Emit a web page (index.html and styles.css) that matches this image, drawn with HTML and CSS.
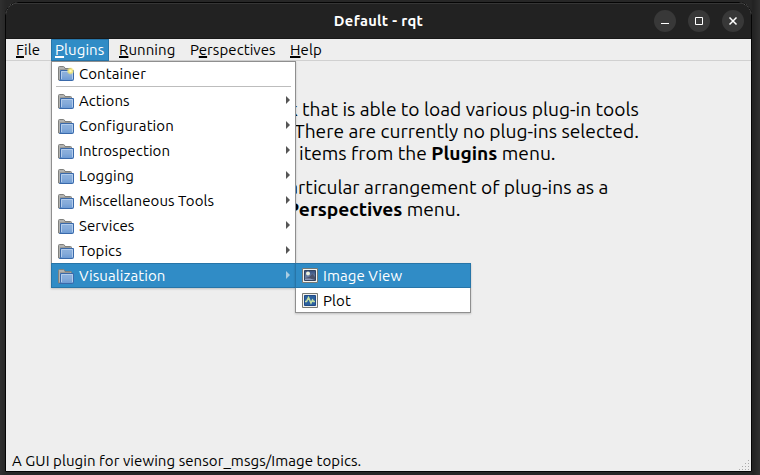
FILE: index.html
```html
<!DOCTYPE html>
<html lang="en">
<head>
<meta charset="utf-8">
<title>Default - rqt</title>
<link rel="stylesheet" href="styles.css">
</head>
<body>
<svg class="defs" width="0" height="0">
  <defs>
    <linearGradient id="blue" x1="0" y1="0" x2="0" y2="1"><stop offset="0" stop-color="#8fb3de"/><stop offset=".5" stop-color="#86abd9"/><stop offset="1" stop-color="#6b9ad4"/></linearGradient>
    <linearGradient id="night" x1="0" y1="0" x2="0" y2="1"><stop offset="0" stop-color="#354d7c"/><stop offset="1" stop-color="#8a9dbf"/></linearGradient>
    <radialGradient id="glow"><stop offset="0" stop-color="#fffde0"/><stop offset=".45" stop-color="#f5e976"/><stop offset="1" stop-color="#f5e976" stop-opacity="0"/></radialGradient>
    <symbol id="folder" viewBox="0 0 16 15">
      <path d="M.5 14V1.500Q.5.500 1.500.500H5.500Q6.500.500 7 2.500H12.500Q13.500 2.500 13.500 3.500V14Z" fill="#b3b3b0" stroke="#80817e"/>
      <path d="M2 3.500H12.500" stroke="#989996"/>
      <path d="M2.500 4.500H15.500V13.500Q15.500 14.500 14.500 14.500H1.500L2.500 13.500Z" fill="url(#blue)" stroke="#3969aa"/>
      <path d="M3.500 13V5.500H14.500V13" fill="none" stroke="#b3cceb"/>
    </symbol>
  </defs>
</svg>
<div class="window">
  <header class="titlebar">
    <div class="title">Default - rqt</div>
    <div class="controls">
      <svg viewBox="0 0 22 22"><circle cx="11" cy="11" r="11"/><path d="M7 13.500H15"/></svg>
      <svg viewBox="0 0 22 22"><circle cx="11" cy="11" r="11"/><path d="M7.500 7.500H14.500V14.500H7.500Z"/></svg>
      <svg viewBox="0 0 22 22"><circle cx="11" cy="11" r="11"/><path d="M7.500 7.500L14.500 14.500M14.500 7.500L7.500 14.500" stroke-width="1.500"/></svg>
    </div>
  </header>
  <nav class="menubar">
    <div class="item file"><u>F</u>ile</div>
    <div class="item plugins"><u>P</u>lugins</div>
    <div class="item running"><u>R</u>unning</div>
    <div class="item persp">P<u>e</u>rspectives</div>
    <div class="item help"><u>H</u>elp</div>
  </nav>
  <main class="content">
    <p class="l1">k that is able to load various plug-in tools</p>
    <p class="l2">There are currently no plug-ins selected.</p>
    <p class="l3">items from the <b>Plugins</b> menu.</p>
    <p class="l4">particular arrangement of plug-ins as a</p>
    <p class="l5"><b>Perspectives</b> menu.</p>
  </main>
  <footer class="status">
    <span>A GUI plugin for viewing sensor_msgs/Image topics.</span>
    <svg class="grip" width="10" height="11" viewBox="0 0 10 11"><path d="M9 0h1v1h-1zM6 3h1v1h-1zM9 3h1v1h-1zM3 6h1v1h-1zM6 6h1v1h-1zM9 6h1v1h-1zM0 9h1v1h-1zM3 9h1v1h-1zM6 9h1v1h-1zM9 9h1v1h-1z"/></svg>
  </footer>
</div>

<div class="menu">
  <div class="row first"><svg class="icon"><use href="#folder"/><circle cx="12.500" cy="5" r="4" fill="url(#glow)"/></svg><span>Container</span></div>
  <div class="sep"></div>
  <div class="row"><svg class="icon"><use href="#folder"/></svg><span>Actions</span><i class="arrow"></i></div>
  <div class="row"><svg class="icon"><use href="#folder"/></svg><span>Configuration</span><i class="arrow"></i></div>
  <div class="row"><svg class="icon"><use href="#folder"/></svg><span>Introspection</span><i class="arrow"></i></div>
  <div class="row"><svg class="icon"><use href="#folder"/></svg><span>Logging</span><i class="arrow"></i></div>
  <div class="row"><svg class="icon"><use href="#folder"/></svg><span>Miscellaneous Tools</span><i class="arrow"></i></div>
  <div class="row"><svg class="icon"><use href="#folder"/></svg><span>Services</span><i class="arrow"></i></div>
  <div class="row"><svg class="icon"><use href="#folder"/></svg><span>Topics</span><i class="arrow"></i></div>
  <div class="row active"><svg class="icon"><use href="#folder"/></svg><span>Visualization</span><i class="arrow"></i></div>
</div>

<div class="menu submenu">
  <div class="row active">
    <svg class="icon"><path d="M.5.500h15v14h-15z" fill="#f3f3ef" stroke="#777974"/><path d="M2.500 2.500h11v10h-11z" fill="url(#night)" stroke="#34435f"/><circle cx="6" cy="5.500" r="2" fill="#edf0dc"/><path d="M3 10L7 9L10.500 6L13 9V12H3Z" fill="#4c526b"/><path d="M3 10.500H8L13 12H3Z" fill="#8d9abb"/></svg>
    <span>Image View</span>
  </div>
  <div class="row">
    <svg class="icon"><path d="M.5.500h15v14h-15z" fill="#f3f3ef" stroke="#777974"/><path d="M2.500 2.500h11v10h-11z" fill="#2c619e" stroke="#204a87"/><path d="M3 8.500H4.500L6.500 4.500L9 10L10.500 7L11.500 8.500H13" fill="none" stroke="#c3dfa3" stroke-width="1.600"/></svg>
    <span>Plot</span>
  </div>
</div>
</body>
</html>
```
FILE: styles.css
```css
* { box-sizing: border-box; }
html, body { margin: 0; width: 760px; height: 475px; overflow: hidden; }
body {
  padding: 2px 8px 3px 5px;
  background: linear-gradient(90deg, #303030, #272727 6px, #272727 751px, #222 753px, #303030);
  color: #000;
  font: 15px/20px Ubuntu, "Noto Sans", sans-serif;
  letter-spacing: .07px;
}
.defs { position: absolute; }
span, p { white-space: pre; }
.window {
  display: flex; flex-direction: column;
  width: 747px; height: 470px;
  border: 1px solid #050505; border-radius: 13px 13px 0 0;
  background: #eee; overflow: hidden;
}
.titlebar {
  display: grid; grid-template-columns: 1fr auto 1fr;
  align-items: center; height: 36px; flex: none;
  background: #222; box-shadow: inset 0 1px #363636;
  border-bottom: 1px solid #181818;
}
.title { grid-column: 2; color: #fff; font-weight: bold; font-size: 14.667px; letter-spacing: .32px; }
.controls { display: flex; justify-content: flex-end; gap: 12px; padding-right: 7px; }
.controls svg { width: 22px; height: 22px; }
.controls circle { fill: #383838; }
.controls path { fill: none; stroke: #fff; }
.menubar { display: flex; height: 22px; flex: none; border-bottom: 1px solid #d0d0d0; }
.item { height: 22px; padding-left: 4px; line-height: 22px; }
.item u { text-decoration-thickness: 2px; text-underline-offset: 1px; text-decoration-skip-ink: none; }
.file { width: 45px; padding-left: 10px; }
.plugins { width: 58px; background: #308cc6; color: #fff; box-shadow: inset 0 0 0 1px #2775a8; }
.running { width: 71px; padding-left: 10px; }
.persp { width: 100px; padding-left: 10px; }
.help { padding-left: 10px; }
.content { flex: 1; padding-top: 37px; font-size: 19.2px; line-height: 22px; letter-spacing: 0; }
.content p { margin: 0; height: 22px; }
.content .l1 { padding-left: 282px; }
.content .l2 { padding-left: 288px; }
.content .l3 { padding-left: 293px; margin-bottom: 12px; }
.content .l4 { padding-left: 271px; }
.content .l5 { padding-left: 281px; }
.status { display: flex; justify-content: space-between; align-items: flex-end; height: 20px; padding: 0 2px 0 6px; line-height: 20px; }
.grip { fill: #aaa; }
.menu {
  position: absolute; left: 51px; top: 61px; width: 245px; height: 227px;
  border: 1px solid #8f8f8f; background: #fff; box-shadow: 0 1px 2px #0003;
}
.row { display: flex; align-items: center; height: 25px; padding: 0 5px 0 6px; line-height: 24px; }
.icon { width: 16px; height: 15px; margin: 2px 5px 0 0; flex: none; }
.first { height: 24px; }
.first .icon { margin-top: -1px; }
.sep { height: 1px; margin: 0 4px 1px; background: #bdbdbd; }
.arrow { margin: -1px 0 0 auto; border-left: 4px solid #555; border-top: 4px solid transparent; border-bottom: 4px solid transparent; }
.active { margin: 0 -1px; padding: 0 6px 0 7px; background: #308cc6; box-shadow: inset 0 0 0 1px #2775a8; color: #fff; }
.active .arrow { border-left-color: #abcde2; }
.submenu { left: 295px; top: 263px; width: 176px; height: 50px; }
.submenu .active { margin-top: -1px; }
.submenu .icon { margin-top: 0; }
```
